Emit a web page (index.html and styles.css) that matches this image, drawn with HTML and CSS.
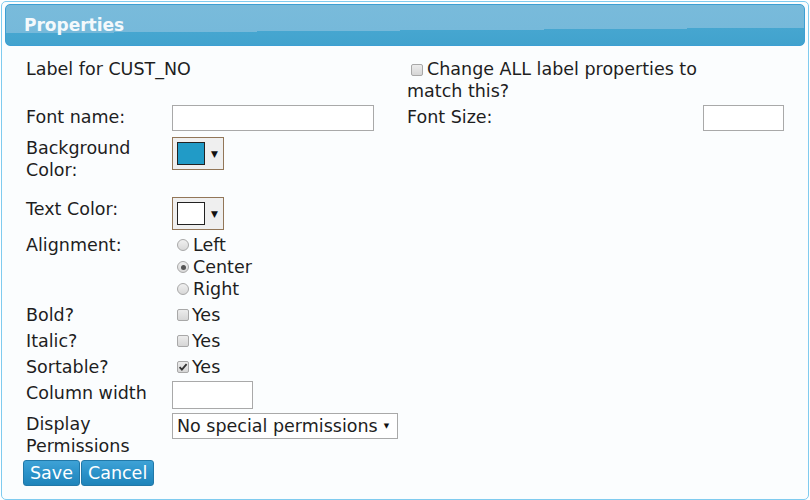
FILE: index.html
```html
<!DOCTYPE html>
<html>
<head>
<meta charset="utf-8">
<link rel="stylesheet" href="styles.css">
</head>
<body>
<div class="dialog">
  <div class="titlebar"><span class="title">Properties</span></div>
  <div class="content">
    <div class="form">
      <div class="cell span2">Label for CUST_NO</div>
      <div class="cell cell-all"><span class="cb cb-all"></span>Change ALL label properties to match this?</div>
      <div class="cell"></div>

      <div class="cell cell-r2">Font name:</div>
      <div class="cell cell-in2"><span class="textbox tb-name"></span></div>
      <div class="cell cell-r2">Font Size:</div>
      <div class="cell cell-in2"><span class="textbox tb-size"></span></div>

      <div class="cell cell-r3">Background<br>Color:</div>
      <div class="cell cell-r3 span3"><span class="picker"><span class="swatch swatch-blue"></span><span class="arrow">▼</span></span></div>

      <div class="cell cell-r4">Text Color:</div>
      <div class="cell cell-pick4 span3"><span class="picker"><span class="swatch swatch-white"></span><span class="arrow">▼</span></span></div>

      <div class="cell">Alignment:</div>
      <div class="cell span3">
        <div class="opt"><span class="rb"></span>Left</div>
        <div class="opt"><span class="rb rb-on"></span>Center</div>
        <div class="opt"><span class="rb"></span>Right</div>
      </div>

      <div class="cell">Bold?</div>
      <div class="cell span3"><div class="opt opt-cb"><span class="cb"></span>Yes</div></div>

      <div class="cell">Italic?</div>
      <div class="cell span3"><div class="opt opt-cb"><span class="cb"></span>Yes</div></div>

      <div class="cell">Sortable?</div>
      <div class="cell span3"><div class="opt opt-cb"><span class="cb cb-on"><svg viewBox="0 0 12 12" width="12" height="12"><path d="M2.6 6.2 L4.9 8.6 L9.6 3.2" fill="none" stroke="#333" stroke-width="1.8"/></svg></span>Yes</div></div>

      <div class="cell">Column width</div>
      <div class="cell cell-in9 span3"><span class="textbox tb-width"></span></div>

      <div class="cell">Display<br>Permissions</div>
      <div class="cell span3"><span class="select">No special permissions<span class="sel-arrow">▼</span></span></div>
    </div>
    <div class="buttons">
      <button class="btn">Save</button><button class="btn">Cancel</button>
    </div>
  </div>
</div>
</body>
</html>
```

FILE: styles.css
```css
html, body {
  margin: 0;
  padding: 0;
  background: #ffffff;
}
body {
  padding: 1px 0 0 1px;
  font-family: "DejaVu Sans", Verdana, sans-serif;
  font-size: 17.5px;
  color: #1e1e1e;
}
.dialog {
  box-sizing: border-box;
  width: 808px;
  height: 499px;
  border: 1px solid #7fcbef;
  border-radius: 5px;
  padding: 2px 3px;
  background: #fbfdfe;
}
.titlebar {
  box-sizing: border-box;
  height: 42px;
  border: 1px solid #3d9fd3;
  border-radius: 5px;
  background: linear-gradient(179.6deg, #79bbdb 0, #76b9da 62%, #46a6d0 62%, #41a2cd 100%);
  display: flex;
  align-items: center;
  padding-left: 18px;
}
.title {
  color: #f4f9fc;
  font-weight: bold;
  font-size: 17px;
}
.content {
  padding: 10px 0 0 18px;
}
.form {
  margin-left: 3px;
  display: grid;
  grid-template-columns: 146px 235px 296px 90px;
  line-height: 22px;
}
.cell {
  padding: 2px 0;
}
.span2 {
  grid-column: span 2;
}
.span3 {
  grid-column: span 3;
}
.cell-all {
  padding-right: 4px;
}
.cb-all {
  margin: 0 4px 0 4px;
}
.cell-r2 {
  padding: 2px 0 5px;
}
.cell-in2 {
  padding: 1px 0 4px;
}
.cell-r3 {
  padding: 2px 0 15px;
}
.cell-r4 {
  padding: 2px 0;
}
.cell-pick4 {
  padding: 1px 0 2px;
}
.cell-in9 {
  padding: 1px 0 2px;
}
.textbox {
  display: block;
  box-sizing: border-box;
  height: 26px;
  border: 1px solid #a9a9a9;
  background: #fff;
}
.tb-name { width: 202px; }
.tb-size { width: 81px; }
.tb-width { width: 81px; height: 28px; }
.picker {
  box-sizing: border-box;
  display: flex;
  align-items: center;
  width: 52px;
  height: 33px;
  border: 1px solid #927658;
  background: #efefef;
  padding-left: 4px;
}
.swatch {
  box-sizing: border-box;
  width: 28px;
  height: 23px;
  border: 1px solid #222;
}
.swatch-blue { background: #219bc7; }
.swatch-white { background: #fff; }
.arrow {
  font-size: 9px;
  margin-left: 6px;
  color: #111;
}
.opt {
  display: flex;
  align-items: center;
  height: 22px;
}
.rb {
  box-sizing: border-box;
  width: 12px;
  height: 12px;
  border-radius: 50%;
  border: 1px solid #a8a8a8;
  background: linear-gradient(#f0f0f0, #d8d8d8);
  margin: 0 4px 0 5px;
  display: flex;
  align-items: center;
  justify-content: center;
}
.rb-on::after {
  content: "";
  width: 5px;
  height: 5px;
  border-radius: 50%;
  background: #555;
}
.cb {
  box-sizing: border-box;
  display: inline-flex;
  vertical-align: -1px;
  width: 12px;
  height: 12px;
  border: 1px solid #a8a8a8;
  border-radius: 2px;
  background: linear-gradient(#ececec, #d6d6d6);
}
.opt-cb .cb {
  margin: 0 3px 0 5px;
}
.cb-on svg {
  margin: -1px;
}
.select {
  box-sizing: border-box;
  display: inline-flex;
  align-items: center;
  width: 226px;
  height: 26px;
  border: 1px solid #a9a9a9;
  background: #fff;
  padding-left: 4px;
}
.sel-arrow {
  font-size: 7px;
  margin-left: 6px;
  color: #111;
}
.buttons {
  display: flex;
  gap: 1px;
  margin-top: 1px;
}
.btn {
  box-sizing: border-box;
  height: 26px;
  padding: 0 6px;
  border: 1px solid #2178a8;
  border-radius: 3px;
  background: linear-gradient(#3ea2d6 0, #2b92c9 50%, #1f84ba 100%);
  color: #fff;
  font-family: "DejaVu Sans", Verdana, sans-serif;
  font-size: 17.5px;
  line-height: 22px;
}
```
